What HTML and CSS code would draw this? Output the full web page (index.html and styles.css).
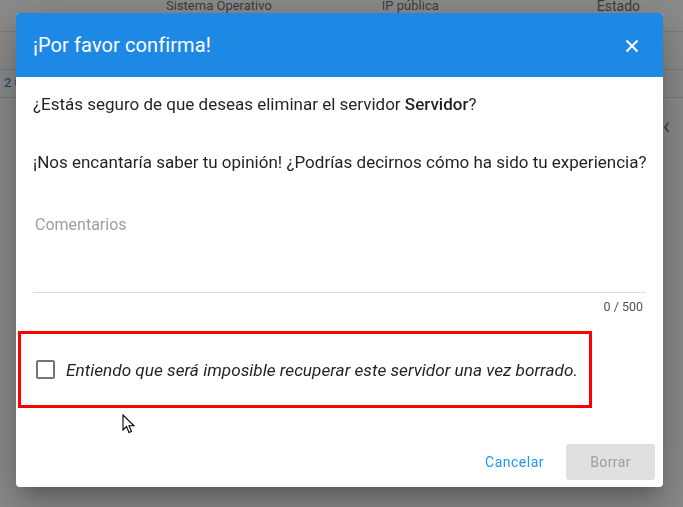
FILE: index.html
```html
<!DOCTYPE html>
<html lang="es">
<head>
<meta charset="utf-8">
<link rel="stylesheet" href="styles.css">
</head>
<body>
<div class="page">
  <div class="thead">
    <span class="th th-os">Sistema Operativo</span>
    <span class="th th-ip">IP pública</span>
    <span class="th th-st">Estado</span>
  </div>
  <div class="row row-a"></div>
  <div class="row row-b"><span class="num">2 0</span></div>
  <div class="row row-c"><span class="chev">‹</span></div>
</div>

<div class="overlay">
  <div class="dialog">
    <div class="dlg-head">
      <span class="dlg-title">¡Por favor confirma!</span>
      <svg class="close" width="14" height="14" viewBox="0 0 14 14"><path d="M1.5 1.5 L12.5 12.5 M12.5 1.5 L1.5 12.5" stroke="#fff" stroke-width="2" fill="none"/></svg>
    </div>
    <div class="dlg-body">
      <p class="q">¿Estás seguro de que deseas eliminar el servidor <b>Servidor</b>?</p>
      <p class="q q2">¡Nos encantaría saber tu opinión! ¿Podrías decirnos cómo ha sido tu experiencia?</p>
      <div class="field">
        <div class="placeholder">Comentarios</div>
      </div>
      <div class="counter">0 / 500</div>
      <div class="confirm-box">
        <span class="checkbox"></span>
        <span class="confirm-text">Entiendo que será imposible recuperar este servidor una vez borrado.</span>
      </div>
    </div>
    <div class="dlg-actions">
      <span class="btn-text">Cancelar</span>
      <span class="btn-disabled">Borrar</span>
    </div>
  </div>
</div>

<svg class="cursor" width="14" height="21" viewBox="0 0 14 21">
  <path d="M1 1 L1 16 L4.5 12.5 L7 18.5 L9.5 17.5 L7 11.8 L12 11.8 Z" fill="#fff" stroke="#000" stroke-width="1.1" stroke-linejoin="miter"/>
</svg>
</body>
</html>
```

FILE: styles.css
```css
* { box-sizing: border-box; }
html, body {
  margin: 0;
  padding: 0;
  width: 683px;
  height: 507px;
  overflow: hidden;
  font-family: Roboto, "Noto Sans", sans-serif;
  background: #fff;
}
.page {
  width: 683px;
  height: 507px;
  background: #fff;
}
.thead {
  height: 32px;
  border-bottom: 1px solid #e0e0e0;
  font-size: 13px;
  color: rgba(0,0,0,0.6);
  display: flex;
}
.th { margin-top: -4px; line-height: 20px; }
.th-os { margin-left: 166px; }
.th-ip { margin-left: 110px; }
.th-st { margin-left: 158px; font-size: 14px; }
.row { border-bottom: 1px solid #e0e0e0; }
.row-a { height: 38px; }
.row-b { height: 28px; padding-left: 4px; padding-top: 2px; }
.num { color: #1976d2; font-size: 13px; }
.row-c { height: 60px; border-bottom: none; text-align: right; padding-right: 13px; padding-top: 14px; }
.chev { color: #777; font-size: 24px; }

.overlay {
  position: fixed;
  inset: 0;
  background: rgba(0,0,0,0.46);
  display: flex;
  align-items: flex-start;
  padding-top: 13px;
  padding-left: 16px;
}
.dialog {
  width: 647px;
  height: 474px;
  background: #fff;
  border-radius: 4px;
  overflow: hidden;
  display: flex;
  flex-direction: column;
  box-shadow: 0 11px 15px -7px rgba(0,0,0,0.2), 0 24px 38px 3px rgba(0,0,0,0.14), 0 9px 46px 8px rgba(0,0,0,0.12);
}
.dlg-head {
  height: 64px;
  background: #1e88e5;
  display: flex;
  align-items: center;
  justify-content: space-between;
  padding: 0 24px 0 17px;
  flex-shrink: 0;
}
.dlg-title {
  color: #fff;
  font-size: 20px;
  font-weight: 400;
  letter-spacing: 0.1px;
}
.close { margin-top: 2px; }
.dlg-body {
  padding: 0 17px 0 17px;
  flex: 1;
  display: flex;
  flex-direction: column;
}
.q {
  margin: 0;
  font-size: 17px;
  line-height: 20px;
  color: rgba(0,0,0,0.87);
  margin-top: 17px;
  white-space: nowrap;
}
.q b { font-weight: 500; }
.q2 { margin-top: 38px; }
.field {
  margin-top: 36px;
  height: 85px;
  border-bottom: 1px solid #dcdcdc;
  padding-left: 2px;
}
.placeholder {
  margin-top: 7px;
  font-size: 16px;
  color: #9e9e9e;
}
.counter {
  text-align: right;
  font-size: 12.5px;
  color: rgba(0,0,0,0.7);
  margin-top: 6px;
  padding-right: 3px;
}
.confirm-box {
  margin-top: 17px;
  margin-left: -15px;
  width: 574px;
  height: 77px;
  border: 3px solid #ff0000;
  display: flex;
  align-items: center;
  padding-left: 15px;
}
.checkbox {
  width: 19px;
  height: 19px;
  border: 2px solid #757575;
  border-radius: 2px;
  flex-shrink: 0;
}
.confirm-text {
  margin-left: 11px;
  font-style: italic;
  font-size: 17.2px;
  color: rgba(0,0,0,0.87);
}
.dlg-actions {
  display: flex;
  justify-content: flex-end;
  align-items: center;
  padding: 0 8px 7px 0;
  gap: 22px;
  flex-shrink: 0;
}
.btn-text {
  color: #2196f3;
  font-size: 14px;
  letter-spacing: 0.5px;
}
.btn-disabled {
  width: 89px;
  height: 36px;
  background: #e0e0e0;
  color: #9e9e9e;
  border-radius: 3px;
  display: flex;
  align-items: center;
  justify-content: center;
  font-size: 14px;
  letter-spacing: 0.4px;
}
.cursor {
  position: absolute;
  left: 122px;
  top: 414px;
}
```
